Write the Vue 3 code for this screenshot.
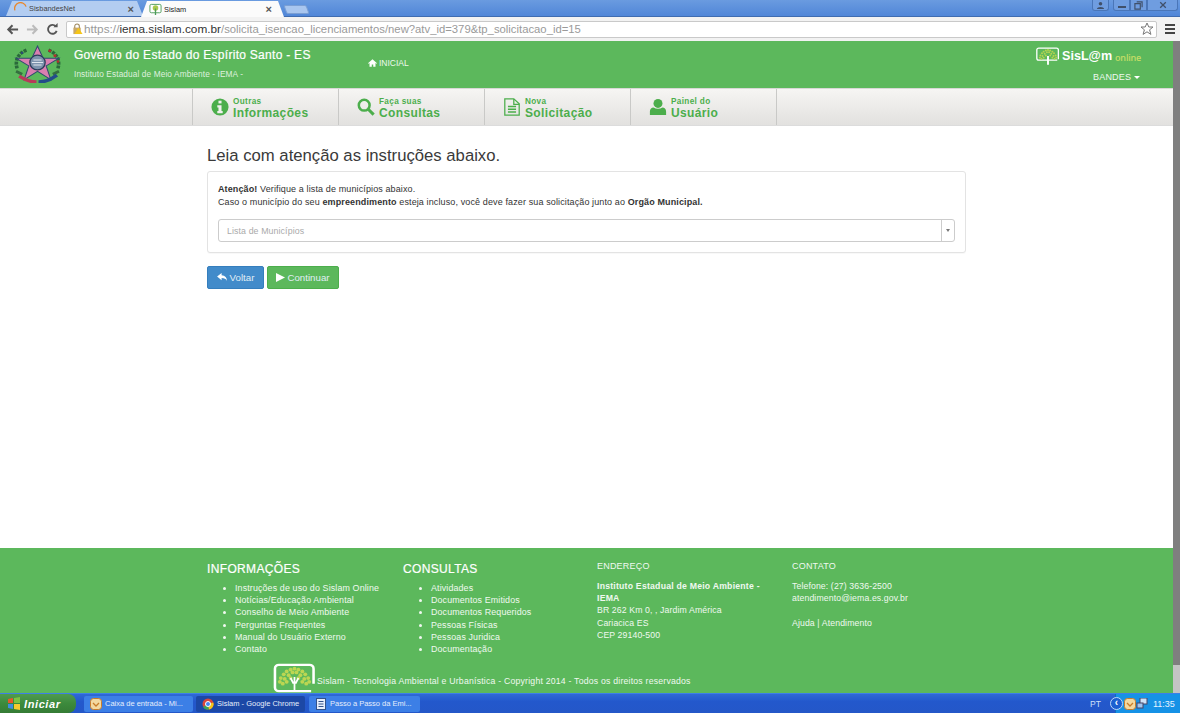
<script setup>
const navItems = [
  { small: 'Outras', big: 'Informações', icon: 'info' },
  { small: 'Faça suas', big: 'Consultas', icon: 'search' },
  { small: 'Nova', big: 'Solicitação', icon: 'doc' },
  { small: 'Painel do', big: 'Usuário', icon: 'user' },
]
const infoLinks = ['Instruções de uso do Sislam Online', 'Notícias/Educação Ambiental', 'Conselho de Meio Ambiente', 'Perguntas Frequentes', 'Manual do Usuário Externo', 'Contato']
const consultaLinks = ['Atividades', 'Documentos Emitidos', 'Documentos Requeridos', 'Pessoas Físicas', 'Pessoas Juridica', 'Documentação']
const leaves = [[8,15],[11,11],[14,8],[18,6],[22,5],[26,6],[30,8],[33,11],[36,15],[12,16],[16,12],[20,9],[24,9],[28,12],[32,16],[7,19],[37,19],[14,19],[30,19],[18,15],[26,15],[10,21],[34,21]]
</script>

<template>
  <div class="screen">
    <div class="titlebar">
      <div class="tab inactive">
        <svg class="fav" viewBox="0 0 14 14"><path d="M1 9A6 6 0 0 1 13 5" fill="none" stroke="#e8872c" stroke-width="1.4"/></svg>
        <span class="tab-title">SisbandesNet</span><span class="tab-x">×</span>
      </div>
      <div class="tab active">
        <svg class="fav" viewBox="0 0 14 14"><rect x="1" y="1.5" width="12" height="9" rx="1.5" fill="#fff" stroke="#4d9c5a"/><circle cx="7" cy="5.5" r="3" fill="#a9c94e"/><path d="M7 6v7" stroke="#4d9c5a" stroke-width="1.4"/></svg>
        <span class="tab-title">Sislam</span><span class="tab-x">×</span>
      </div>
      <div class="newtab"></div>
      <div class="winbtns">
        <div class="wbtn w-user"><svg viewBox="0 0 10 10" width="9" height="9"><circle cx="5" cy="3" r="2" fill="#40506a"/><path d="M1 9c0-3 8-3 8 0z" fill="#40506a"/></svg></div>
        <div class="wbtn w-min"><span class="min-bar"></span></div>
        <div class="wbtn w-max"><svg viewBox="0 0 10 10" width="9" height="9"><path d="M3 1h6v6M1 3h6v6H1z" fill="none" stroke="#40506a" stroke-width="1.3"/></svg></div>
        <div class="wbtn w-close"><svg viewBox="0 0 10 10" width="8" height="8"><path d="M1.5 1.5l7 7M8.5 1.5l-7 7" stroke="#40506a" stroke-width="1.6"/></svg></div>
      </div>
    </div>

    <div class="toolbar">
      <svg class="tb-ic" viewBox="0 0 14 14"><path d="M13 7H3M7 2.500L2.500 7 7 11.500" fill="none" stroke="#555" stroke-width="2.200"/></svg>
      <svg class="tb-ic" viewBox="0 0 14 14"><path d="M1 7h10M7 2.500L11.500 7 7 11.500" fill="none" stroke="#bbb" stroke-width="2.200"/></svg>
      <svg class="tb-ic" viewBox="0 0 14 14"><path d="M11.500 8.500A4.800 4.800 0 1 1 10.500 3.500" fill="none" stroke="#555" stroke-width="2"/><path d="M8 4.500h4.500V0z" fill="#555"/></svg>
      <div class="urlbar">
        <svg class="lock" viewBox="0 0 12 12"><rect x="1.500" y="4.500" width="8" height="7" fill="#c9a868"/><path d="M3 5V3a2.500 2.500 0 0 1 5 0v2" fill="none" stroke="#a08a60" stroke-width="1.200"/><path d="M7 4.500l4.500 7h-9z" fill="#f5c518"/></svg>
        <span class="url"><span class="url-scheme">https://</span><span class="url-host">iema.sislam.com.br</span><span class="url-path">/solicita_isencao_licenciamentos/new?atv_id=379&amp;tp_solicitacao_id=15</span></span>
        <svg class="star" viewBox="0 0 14 14"><path d="M7 1l1.800 4h4.200l-3.400 2.800 1.300 4.600L7 9.800l-3.900 2.600 1.300-4.600L1 5h4.200z" fill="#fff" stroke="#777"/></svg>
      </div>
      <div class="menu-ic"><i></i><i></i><i></i></div>
    </div>

    <div class="viewport">
      <div class="page">
        <header class="site-head">
          <svg class="crest" viewBox="1 0 46 39" preserveAspectRatio="none">
            <path d="M4 24C1 13 8 7 14 5M44 24c3-11-4-17-10-19" fill="none" stroke="#2a6a3a" stroke-width="3.500" stroke-dasharray="3 1"/>
            <path d="M3 27l6 3M45 27l-6 3" stroke="#35703f" stroke-width="3"/>
            <circle cx="36" cy="6" r="1.500" fill="#b03030"/><circle cx="41" cy="11" r="1.500" fill="#b03030"/><circle cx="44" cy="17" r="1.300" fill="#b03030"/><circle cx="9" cy="8" r="1.200" fill="#2b4a7a"/>
            <path d="M24 1l5.500 12.500H45L32.500 21.500l4.500 14L24 27l-13 8.500 4.500-14L3 13.500h15.500z" fill="#d97fb0" stroke="#2f4a70" stroke-width="1"/>
            <circle cx="24" cy="18" r="7.500" fill="#7d93ad" stroke="#2c3e5c" stroke-width="1.300"/>
            <path d="M18.500 18h11M20 15.500h8M20 20.500h8" stroke="#dfe6ee" stroke-width="1"/>
            <path d="M6 32c6 4 12 6 17 6" fill="none" stroke="#b83a5a" stroke-width="3.500"/>
            <path d="M25 38c7 0 13-3 18-7" fill="none" stroke="#234d8a" stroke-width="3.500"/>
          </svg>
          <div class="gov">
            <div class="gov-title">Governo do Estado do Espírito Santo - ES</div>
            <div class="gov-sub">Instituto Estadual de Meio Ambiente - IEMA -</div>
          </div>
          <div class="inicial">
            <svg viewBox="0 0 12 10" width="9" height="8"><path d="M6 0l6 5.200-.7.800L10 5v5H7V7H5v3H2V5L.7 6 0 5.200z" fill="#fff"/></svg>
            <span>INICIAL</span>
          </div>
          <div class="brand">
            <div class="brand-row">
              <svg class="brand-logo" viewBox="0 0 44 32">
                <path d="M41 22V5a3.500 3.500 0 0 0-3.500-3.500H5A3.500 3.500 0 0 0 1.500 5v15A3.500 3.500 0 0 0 5 23.500h34" fill="none" stroke="#fff" stroke-width="2.400"/>
                <circle v-for="(p, i) in leaves" :key="i" :cx="p[0]" :cy="p[1]" r="1.800" fill="#b6d34f"/>
                <path d="M22 16v16" stroke="#fff" stroke-width="3.500"/>
              </svg>
              <span class="brand-name">SisL@m</span><span class="brand-online">online</span>
            </div>
            <div class="bandes">BANDES <i class="caret"></i></div>
          </div>
        </header>

        <nav class="site-nav">
          <a v-for="item in navItems" :key="item.big" class="nav-item">
            <svg v-if="item.icon === 'info'" class="nav-ic" viewBox="0 0 20 20"><circle cx="10" cy="10" r="9.500" fill="#4cae4c"/><rect x="8.300" y="3" width="3.400" height="3" fill="#f1f0ee"/><path d="M7 8h4.700v6.500H13V17H7v-2.500h1.300V10.500H7z" fill="#f1f0ee"/></svg>
            <svg v-else-if="item.icon === 'search'" class="nav-ic" viewBox="0 0 20 20"><circle cx="8" cy="8" r="6" fill="none" stroke="#4cae4c" stroke-width="2.800"/><path d="M12.500 12.500L18.500 18.500" stroke="#4cae4c" stroke-width="3.400"/></svg>
            <svg v-else-if="item.icon === 'doc'" class="nav-ic" viewBox="0 0 20 20"><path d="M2 1h10l6 5.500V19H2z" fill="none" stroke="#4cae4c" stroke-width="1.400"/><path d="M12 1v6h6" fill="none" stroke="#4cae4c" stroke-width="1.400"/><path d="M5.500 9.500h9M5.500 12.500h9M5.500 15.500h9" stroke="#4cae4c" stroke-width="1.600"/></svg>
            <svg v-else class="nav-ic" viewBox="0 0 20 20"><circle cx="10" cy="6" r="5" fill="#4cae4c"/><path d="M1 19v-4c0-3 2-4.500 4-4.500 3 2 7 2 10 0 2 0 4 1.500 4 4.500v4z" fill="#4cae4c"/></svg>
            <span class="nav-text">
              <span class="nav-small">{{ item.small }}</span>
              <span class="nav-big">{{ item.big }}</span>
            </span>
          </a>
        </nav>

        <main class="content">
          <h1>Leia com atenção as instruções abaixo.</h1>
          <div class="panel">
            <p><b>Atenção!</b> Verifique a lista de municípios abaixo.</p>
            <p>Caso o município do seu <b>empreendimento</b> esteja incluso, você deve fazer sua solicitação junto ao <b>Orgão Municipal.</b></p>
            <div class="select">
              <span class="placeholder">Lista de Municípios</span>
              <span class="sel-arrow"><i></i></span>
            </div>
          </div>
          <div class="actions">
            <button class="btn blue">
              <svg viewBox="0 0 12 10" width="11" height="9"><path d="M5 0L0 4l5 4V5.500c3 0 5 .7 6 3.500 0-4-2-6-6-6.500z" fill="#fff"/></svg>
              Voltar
            </button>
            <button class="btn green">
              <svg viewBox="0 0 10 10" width="9" height="9"><path d="M0 0l10 5-10 5z" fill="#fff"/></svg>
              Continuar
            </button>
          </div>
        </main>

        <footer class="site-foot">
          <div class="foot-cols">
            <section class="col col1">
              <h3>INFORMAÇÕES</h3>
              <ul><li v-for="l in infoLinks" :key="l">{{ l }}</li></ul>
            </section>
            <section class="col col2">
              <h3>CONSULTAS</h3>
              <ul><li v-for="l in consultaLinks" :key="l">{{ l }}</li></ul>
            </section>
            <section class="col col3">
              <h4>ENDEREÇO</h4>
              <p><b>Instituto Estadual de Meio Ambiente - IEMA</b><br>BR 262 Km 0, , Jardim América<br>Cariacica ES<br>CEP 29140-500</p>
            </section>
            <section class="col col4">
              <h4>CONTATO</h4>
              <p>Telefone: (27) 3636-2500<br>atendimento@iema.es.gov.br<br><br>Ajuda | Atendimento</p>
            </section>
          </div>
          <div class="copy">
            <svg class="copy-logo" viewBox="0 0 44 32" preserveAspectRatio="none">
              <path d="M41.500 22V6a4 4 0 0 0-4-4H6a4 4 0 0 0-4 4v20a4 4 0 0 0 4 4h33" fill="none" stroke="#fff" stroke-width="2.600"/>
              <circle v-for="(p, i) in leaves" :key="i" :cx="p[0]" :cy="p[1] + 1" r="2" fill="#bcd652"/>
              <path d="M22 18v12M18 16l3 6M26 16l-3 6M22 15v6" stroke="#fff" stroke-width="1.800"/>
            </svg>
            <span>Sislam - Tecnologia Ambiental e Urbanística - Copyright 2014 - Todos os direitos reservados</span>
          </div>
        </footer>
      </div>
      <div class="scrollbar"><div class="thumb"></div></div>
    </div>

    <div class="taskbar">
      <div class="start">
        <svg viewBox="0 0 14 14" width="14" height="14"><path d="M1 2l5-1v5H1z" fill="#e8562a"/><path d="M7 1l6-1v6H7z" fill="#7cc242"/><path d="M1 7h5v5l-5-1z" fill="#3f8de0"/><path d="M7 7h6v6l-6-1z" fill="#f7c92e"/></svg>
        <span>Iniciar</span>
      </div>
      <div class="task">
        <svg viewBox="0 0 12 12" width="12" height="12"><rect x=".5" y=".5" width="11" height="11" rx="3" fill="#f3d9a0" stroke="#c97d2a"/><path d="M3 5l3 3 3-3" fill="none" stroke="#c97d2a" stroke-width="1.300"/></svg>
        <span>Caixa de entrada - Mi...</span>
      </div>
      <div class="task on">
        <svg viewBox="0 0 12 12" width="12" height="12"><circle cx="6" cy="6" r="5.500" fill="#d9483b"/><path d="M6 6L1 9a5.500 5.500 0 0 0 6 2.500z" fill="#3ba55c"/><path d="M6 6l5.300-1.500a5.500 5.500 0 0 1-4.300 7z" fill="#f5c518"/><circle cx="6" cy="6" r="2.500" fill="#4285f4" stroke="#fff"/></svg>
        <span>Sislam - Google Chrome</span>
      </div>
      <div class="task">
        <svg viewBox="0 0 12 12" width="12" height="12"><rect x="1.500" y=".5" width="9" height="11" fill="#e6eefc" stroke="#33528a"/><path d="M3.500 3.500h5M3.500 6h5M3.500 8.500h5" stroke="#33528a"/></svg>
        <span>Passo a Passo da Emi...</span>
      </div>
      <div class="lang">PT</div>
      <div class="tray">
        <span class="tray-arrow">‹</span>
        <svg viewBox="0 0 12 12" width="12" height="12"><rect x=".5" y=".5" width="11" height="11" rx="3" fill="#f3d9a0" stroke="#c97d2a"/><path d="M3 5l3 3 3-3" fill="none" stroke="#c97d2a" stroke-width="1.300"/></svg>
        <svg viewBox="0 0 12 12" width="12" height="12"><rect x="4" y="0" width="7" height="6" fill="#cfe2f7" stroke="#446"/><rect x="1" y="5" width="6" height="5" fill="#9ec4ee" stroke="#446"/></svg>
        <span class="clock">11:35</span>
      </div>
    </div>
  </div>
</template>

<style>
html, body { margin: 0; padding: 0; overflow: hidden; }
</style>

<style scoped>
* { box-sizing: border-box; }
.screen { width: 1180px; height: 713px; display: flex; flex-direction: column; overflow: hidden; font-family: "Liberation Sans", Arial, sans-serif; background: #fff; }

.titlebar { height: 17px; flex: none; display: flex; align-items: flex-end; padding-left: 6px; gap: 1px; background: linear-gradient(#6a9be0, #5086d8); border-bottom: 1px solid #3f6cb0; }
.tab { height: 15px; display: flex; align-items: center; font-size: 7.400px; color: #444; clip-path: polygon(0 100%, 6px 0, calc(100% - 6px) 0, 100% 100%); padding: 0 12px 0 8px; }
.tab.inactive { width: 137px; background: #b3cdf1; margin-right: -3px; padding-right: 9px; }
.tab.active { width: 143px; background: #fbfbfb; color: #222; height: 16px; margin-bottom: -1px; }
.fav { width: 13px; height: 13px; flex: none; margin-right: 2px; }
.tab-title { flex: 1; }
.tab-x { font-size: 11px; color: #555; font-weight: bold; }
.newtab { width: 23px; height: 9px; margin: 0 0 2px 0; background: #a9c6ef; border: 1px solid #7b9fd4; border-radius: 2px; transform: skewX(20deg); }
.winbtns { margin-left: auto; align-self: flex-start; display: flex; padding-right: 2px; height: 12px; }
.wbtn { height: 11px; display: flex; align-items: center; justify-content: center; border: 1px solid #4a76b8; border-top: 0; background: #6f9de0; }
.w-user { width: 17px; margin-right: 4px; border-radius: 0 0 3px 3px; }
.w-min { width: 17px; border-radius: 0 0 0 3px; }
.min-bar { width: 8px; height: 2px; background: #40506a; margin-top: 4px; }
.w-max { width: 17px; }
.w-close { width: 31px; border-radius: 0 0 3px 0; }

.toolbar { height: 24px; flex: none; display: flex; align-items: center; padding: 0 0 0 6px; gap: 0; background: #f2f2f2; }
.tb-ic { width: 13px; height: 13px; flex: none; margin-right: 7px; }
.urlbar { margin-left: 0; height: 17px; width: 1091px; display: flex; align-items: center; background: #fff; border: 1px solid #c9c9c9; border-radius: 2px; padding: 0 2px 0 5px; }
.lock { width: 11px; height: 12px; flex: none; margin-right: 1px; }
.url { flex: 1; font-size: 11.800px; white-space: nowrap; }
.url-scheme { color: #9a9a9a; }
.url-host { color: #333; }
.url-path { color: #9a9a9a; font-size: 11.300px; }
.star { width: 14px; height: 14px; flex: none; }
.menu-ic { margin-left: 8px; width: 10px; display: flex; flex-direction: column; gap: 2px; }
.menu-ic i { height: 2px; background: #444; display: block; }

.viewport { flex: 1; min-height: 0; display: flex; }
.page { flex: 1; min-width: 0; display: flex; flex-direction: column; }
.scrollbar { width: 7px; flex: none; background: #7f7f7f; display: flex; flex-direction: column; justify-content: flex-end; }
.thumb { height: 28px; background: #c4c4c4; }

.site-head { height: 47px; flex: none; display: flex; background: #5cb85c; color: #fff; padding-left: 14px; }
.crest { width: 47px; height: 38px; flex: none; margin-top: 4px; }
.gov { width: 294px; margin-left: 13px; padding-top: 7px; }
.gov-title { font-size: 12px; font-weight: normal; line-height: 14px; letter-spacing: .28px; -webkit-text-stroke: .2px #fff; }
.gov-sub { font-size: 8.300px; line-height: 10px; margin-top: 7px; color: #dff0df; letter-spacing: .1px; }
.inicial { display: flex; align-items: center; gap: 2px; font-size: 8.500px; height: 12px; margin-top: 16px; color: #eef8ee; }
.brand { margin-left: auto; width: 137px; padding-top: 3px; }
.brand-row { display: flex; align-items: center; height: 24px; }
.brand-logo { width: 24px; height: 20px; flex: none; }
.brand-name { font-size: 12.600px; font-weight: bold; margin-left: 2px; letter-spacing: 0; }
.brand-online { font-size: 9px; font-weight: 600; margin-left: 3px; color: #c3dd66; font-family: "Open Sans", sans-serif; margin-top: 3px; letter-spacing: -.2px; }
.bandes { font-size: 9px; margin-top: 4px; margin-left: 57px; color: #eef8ee; letter-spacing: .2px; display: flex; align-items: center; gap: 3px; }
.caret { width: 0; height: 0; border-left: 3px solid transparent; border-right: 3px solid transparent; border-top: 3px solid #fff; }

.site-nav { height: 38px; flex: none; display: flex; padding-left: 192px; background: linear-gradient(#f6f5f3, #e2e1df); border-top: 1px solid #d8d8d6; border-bottom: 1px solid #dcdcdc; }
.nav-item { width: 146px; display: flex; align-items: center; justify-content: flex-start; border-left: 1px solid #c9c9c7; padding-left: 18px; }
.nav-item:last-child { border-right: 1px solid #c9c9c7; width: 147px; }
.nav-ic { width: 18px; height: 18px; flex: none; margin-right: 4px; }
.nav-text { display: flex; flex-direction: column; color: #4cae4c; margin-top: 1px; }
.nav-small { font-size: 8.200px; font-weight: bold; line-height: 9px; letter-spacing: .35px; padding-top: 1px; }
.nav-big { font-size: 12px; font-weight: bold; line-height: 14px; letter-spacing: .37px; }

.content { flex: 1; min-height: 0; padding: 20px 0 0 207px; }
h1 { margin: 0 0 5px; font-size: 16.700px; line-height: 20px; font-weight: normal; color: #3a3a3a; width: 760px; }
.panel { width: 759px; height: 82px; border: 1px solid #e3e3e3; border-radius: 3px; padding: 11px 10px 0; font-size: 9px; color: #333; background: #fff; box-shadow: 0 1px 1px rgba(0,0,0,.03); }
.panel p { margin: 0; line-height: 13px; white-space: nowrap; letter-spacing: .12px; }
.select { margin-top: 10px; height: 23px; width: 737px; border: 1px solid #ccc; border-radius: 3px; display: flex; align-items: center; justify-content: space-between; }
.placeholder { font-size: 8.800px; color: #aaa; padding-left: 8px; letter-spacing: .1px; }
.sel-arrow { width: 13px; height: 100%; border-left: 1px solid #ccc; display: flex; align-items: center; justify-content: center; }
.sel-arrow i { width: 0; height: 0; border-left: 2.500px solid transparent; border-right: 2.500px solid transparent; border-top: 3px solid #777; }
.actions { display: flex; gap: 3px; margin-top: 13px; }
.btn { height: 23px; border: 1px solid; border-radius: 2px; color: #e0eef6; font-family: inherit; font-size: 9.700px; display: flex; align-items: center; justify-content: center; gap: 2px; padding: 0; }
.blue { width: 57px; background: #428bca; border-color: #357ebd; }
.green { width: 72px; background: #5cb85c; border-color: #4cae4c; }

.site-foot { height: 145px; flex: none; background: #5cb85c; color: #f0f8f0; position: relative; padding-left: 207px; }
.foot-cols { display: flex; height: 110px; padding-top: 12px; }
.col { flex: none; }
.col1 { width: 196px; }
.col2 { width: 194px; }
.col3 { width: 195px; }
.col4 { width: 190px; }
h3 { margin: 1px 0 0; font-size: 12px; font-weight: normal; line-height: 16px; color: #fff; letter-spacing: .35px; -webkit-text-stroke: .2px #fff; }
h4 { margin: 0; font-size: 9px; font-weight: normal; line-height: 12px; letter-spacing: .2px; }
ul { margin: 5px 0 0; padding: 0 0 0 28px; font-size: 8.900px; line-height: 12.200px; letter-spacing: .13px; }
li { white-space: nowrap; }
.col3 p, .col4 p { margin: 8px 0 0; font-size: 8.700px; line-height: 12.200px; letter-spacing: .12px; }
.col3 p { width: 172px; }
.col3 b { letter-spacing: .22px; }
.copy { display: flex; align-items: flex-end; margin-left: 66px; margin-top: 5px; height: 30px; font-size: 8.700px; letter-spacing: .215px; }
.copy-logo { width: 43px; height: 30px; flex: none; margin-right: 1px; }
.copy span { padding-bottom: 7px; }

.taskbar { height: 20px; flex: none; display: flex; align-items: center; background: linear-gradient(#2f69d6, #2358cc 40%, #2457c8); border-top: 1px solid #3d7fe8; }
.start { width: 76px; height: 19px; flex: none; display: flex; align-items: center; gap: 3px; padding-left: 7px; background: linear-gradient(#4f9b4f, #3c8a3c 50%, #357c35); border-radius: 0 8px 8px 0; color: #fff; font-size: 11px; font-style: italic; font-weight: bold; letter-spacing: .6px; }
.task { width: 109px; height: 16px; flex: none; margin-left: 8px; display: flex; align-items: center; gap: 3px; padding-left: 6px; background: #3c7fe6; border-radius: 2px; font-size: 7.500px; color: #e6eefc; white-space: nowrap; }
.task.on { margin-left: 3px; background: #1c48a6; }
.task.on + .task { margin-left: 4px; width: 111px; }
.lang { margin-left: auto; margin-right: 15px; font-size: 8.500px; color: #cfe0fa; width: 10px; }
.tray { width: 65px; height: 19px; flex: none; display: flex; align-items: center; gap: 0; background: #1692e6; border-left: 1px solid #0f6cc0; padding-left: 0; color: #e8f4ff; font-size: 9px; }
.tray-arrow { width: 13px; height: 13px; flex: none; margin-left: -6px; margin-right: 1px; border-radius: 50%; background: #1c5fd0; border: 1px solid #bcd8fa; color: #fff; font-size: 10px; line-height: 9px; text-align: center; font-weight: bold; }
.clock { margin-left: 5px; }
</style>
